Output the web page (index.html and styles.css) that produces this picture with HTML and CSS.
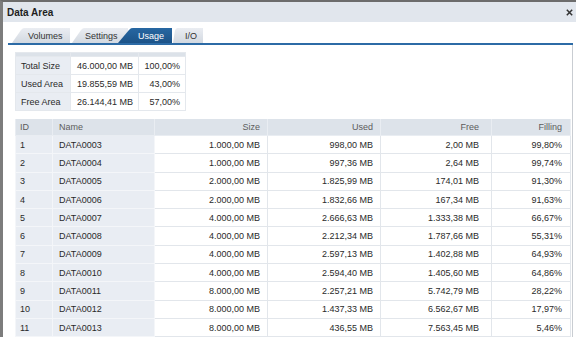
FILE: index.html
```html
<!DOCTYPE html>
<html>
<head>
<meta charset="utf-8">
<link rel="stylesheet" href="styles.css">
</head>
<body>
<div class="window">
  <div class="titlebar">
    <span class="title">Data Area</span>
    <svg class="close" width="7" height="7" viewBox="0 0 7 7"><path d="M0.8 0.8 L6.2 6.2 M6.2 0.8 L0.8 6.2" stroke="#333" stroke-width="1.5"/></svg>
  </div>
  <div class="folder">
    <div class="tabstrip">
      <div class="tab t-volumes">Volumes</div>
      <div class="tab t-settings">Settings</div>
      <div class="tab t-usage active">Usage</div>
      <div class="tab t-io">I/O</div>
    </div>
    <div class="panel">
      <table class="summary">
        <colgroup><col class="s-lbl"><col class="s-val"><col class="s-pct"></colgroup>
        <tr class="band"><td></td><td></td><td></td></tr>
        <tr><td class="lbl">Total Size</td><td class="val">46.000,00 MB</td><td class="pct">100,00%</td></tr>
        <tr><td class="lbl">Used Area</td><td class="val">19.855,59 MB</td><td class="pct">43,00%</td></tr>
        <tr><td class="lbl">Free Area</td><td class="val">26.144,41 MB</td><td class="pct">57,00%</td></tr>
      </table>
      <table class="grid">
        <colgroup>
          <col class="c-id"><col class="c-name"><col class="c-size"><col class="c-used"><col class="c-free"><col class="c-fill">
        </colgroup>
        <thead>
          <tr><th class="id">ID</th><th class="name">Name</th><th class="size">Size</th><th class="used">Used</th><th class="free">Free</th><th class="fill">Filling</th></tr>
        </thead>
        <tbody>
          <tr><td class="id">1</td><td class="name">DATA0003</td><td class="size">1.000,00 MB</td><td class="used">998,00 MB</td><td class="free">2,00 MB</td><td class="fill">99,80%</td></tr>
          <tr><td class="id">2</td><td class="name">DATA0004</td><td class="size">1.000,00 MB</td><td class="used">997,36 MB</td><td class="free">2,64 MB</td><td class="fill">99,74%</td></tr>
          <tr><td class="id">3</td><td class="name">DATA0005</td><td class="size">2.000,00 MB</td><td class="used">1.825,99 MB</td><td class="free">174,01 MB</td><td class="fill">91,30%</td></tr>
          <tr><td class="id">4</td><td class="name">DATA0006</td><td class="size">2.000,00 MB</td><td class="used">1.832,66 MB</td><td class="free">167,34 MB</td><td class="fill">91,63%</td></tr>
          <tr><td class="id">5</td><td class="name">DATA0007</td><td class="size">4.000,00 MB</td><td class="used">2.666,63 MB</td><td class="free">1.333,38 MB</td><td class="fill">66,67%</td></tr>
          <tr><td class="id">6</td><td class="name">DATA0008</td><td class="size">4.000,00 MB</td><td class="used">2.212,34 MB</td><td class="free">1.787,66 MB</td><td class="fill">55,31%</td></tr>
          <tr><td class="id">7</td><td class="name">DATA0009</td><td class="size">4.000,00 MB</td><td class="used">2.597,13 MB</td><td class="free">1.402,88 MB</td><td class="fill">64,93%</td></tr>
          <tr><td class="id">8</td><td class="name">DATA0010</td><td class="size">4.000,00 MB</td><td class="used">2.594,40 MB</td><td class="free">1.405,60 MB</td><td class="fill">64,86%</td></tr>
          <tr><td class="id">9</td><td class="name">DATA0011</td><td class="size">8.000,00 MB</td><td class="used">2.257,21 MB</td><td class="free">5.742,79 MB</td><td class="fill">28,22%</td></tr>
          <tr><td class="id">10</td><td class="name">DATA0012</td><td class="size">8.000,00 MB</td><td class="used">1.437,33 MB</td><td class="free">6.562,67 MB</td><td class="fill">17,97%</td></tr>
          <tr><td class="id">11</td><td class="name">DATA0013</td><td class="size">8.000,00 MB</td><td class="used">436,55 MB</td><td class="free">7.563,45 MB</td><td class="fill">5,46%</td></tr>
        </tbody>
      </table>
    </div>
  </div>
</div>
</body>
</html>
```

FILE: styles.css
```css
html, body {
  margin: 0;
  padding: 0;
}
body {
  width: 576px;
  height: 337px;
  overflow: hidden;
  background: #ffffff;
  font-family: "Liberation Sans", Arial, sans-serif;
  font-size: 9px;
  color: #2a2a2a;
}
.window {
  height: 337px;
  box-sizing: border-box;
  border-top: 2px solid #6c6c6c;
  border-left: 3px solid #7c7c7c;
  display: flex;
  flex-direction: column;
}
.titlebar {
  height: 20px;
  flex: none;
  background: #e1e6ed;
  display: flex;
  align-items: center;
  justify-content: space-between;
  padding: 0 3px 0 4px;
}
.title {
  font-weight: bold;
  font-size: 10px;
  color: #1e1e1e;
}
.close {
  display: block;
}
.folder {
  flex: 1;
  margin: 0 3px 0 5px;
  display: flex;
  flex-direction: column;
}
.tabstrip {
  height: 21px;
  flex: none;
  display: flex;
  align-items: flex-end;
  padding-left: 4px;
  border-bottom: 2px solid #2c6ba6;
}
.tab {
  height: 15px;
  box-sizing: border-box;
  display: flex;
  align-items: center;
  background: linear-gradient(#eaedf2, #d3d9e1);
  color: #333333;
  clip-path: polygon(0 100%, 9px 2px, 11px 0.3px, 13px 0, 100% 0, 100% 100%);
  position: relative;
}
.t-volumes {
  width: 58px;
  padding-left: 16px;
}
.t-settings {
  width: 56px;
  margin-left: 2px;
  padding-left: 13px;
}
.t-usage {
  width: 54px;
  margin-left: -10px;
  padding-left: 20px;
  clip-path: polygon(0 100%, 11px 2px, 13px 0.3px, 15px 0, 100% 0, 100% 100%);
  z-index: 1;
}
.tab.active {
  background: linear-gradient(#2767a2, #1c5388);
  color: #ffffff;
}
.t-io {
  width: 30px;
  margin-left: 1px;
  padding-left: 12px;
  clip-path: polygon(0 100%, 2px 2px, 4px 0, 100% 0, 100% 100%);
}
.panel {
  flex: 1;
  border-right: 1px solid #c9cdd2;
  padding: 7px 2px 0 7px;
}
table {
  border-collapse: collapse;
  table-layout: fixed;
}
td, th {
  padding: 0;
  white-space: nowrap;
  overflow: hidden;
}
.summary {
  width: 170px;
}
.s-lbl { width: 55px; }
.s-val { width: 68px; }
.s-pct { width: 47px; }
.summary td {
  height: 17px;
  border: 1px solid #e4e8ed;
}
.summary tr.band td {
  height: 3px;
  background: #dce2e9;
}
.summary .lbl {
  padding-left: 5px;
  background: #e9edf3;
}
.summary .val {
  padding-left: 6px;
}
.summary .pct {
  text-align: right;
  padding-right: 5px;
}
.grid {
  margin-top: 8px;
  width: 555px;
}
.c-id { width: 37px; }
.c-name { width: 102px; }
.c-size { width: 113px; }
.c-used { width: 113px; }
.c-free { width: 111px; }
.c-fill { width: 79px; }
.grid th {
  height: 16px;
  font-weight: normal;
  color: #5c5c5c;
  background: #dde3ea;
  border: 1px solid #e9edf2;
  border-top: none;
}
.grid td {
  height: 17.3px;
  border: 1px solid #e2e6eb;
}
.grid td.id, .grid td.name {
  background: #e9edf3;
  border-color: #f4f6f9;
}
.grid .id {
  text-align: left;
  padding-left: 4px;
}
.grid .name {
  text-align: left;
  padding-left: 6px;
}
.grid .size, .grid .used {
  text-align: right;
  padding-right: 7px;
}
.grid .free {
  text-align: right;
  padding-right: 12px;
}
.grid .fill {
  text-align: right;
  padding-right: 8px;
}
```
